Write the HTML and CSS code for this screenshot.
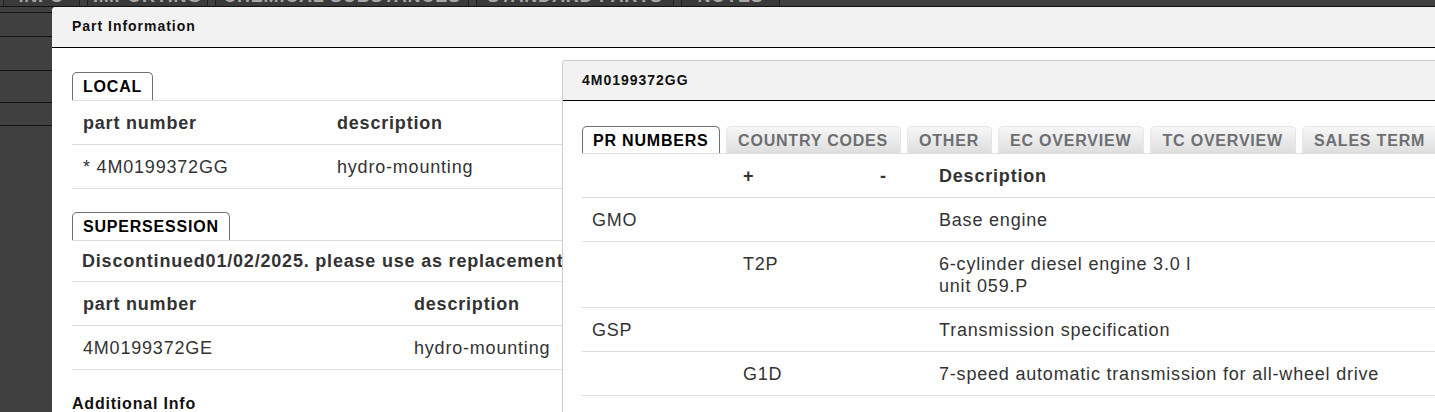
FILE: index.html
```html
<!DOCTYPE html>
<html lang="en">
<head>
    <meta charset="UTF-8">
    <title>Part Information</title>
    <link rel="stylesheet" href="styles.css">
</head>
<body>
    <!-- Main application behind the dialogs -->
    <div class="app-tabs">
        <div class="app-tab" style="width: 77px"><span>INFO</span></div>
        <div class="app-tab" style="width: 121px"><span>IMPORTING</span></div>
        <div class="app-tab" style="width: 254px"><span>CHEMICAL SUBSTANCES</span></div>
        <div class="app-tab" style="width: 198px"><span>STANDARD PARTS</span></div>
        <div class="app-tab" style="width: 99px"><span>NOTES</span></div>
    </div>
    <div class="app-rows">
        <div class="app-row" style="height: 6px"></div>
        <div class="app-row" style="height: 24px"></div>
        <div class="app-row" style="height: 34px"></div>
        <div class="app-row" style="height: 32px"></div>
        <div class="app-row" style="height: 23px"></div>
    </div>

    <!-- Part information dialog -->
    <div class="dialog dialog-part">
        <div class="dialog-header">Part Information</div>
        <div class="dialog-body">
            <div class="section-tabs">
                <span class="section-tab">LOCAL</span>
            </div>
            <table class="grid grid-local">
                <tr>
                    <th>part number</th>
                    <th>description</th>
                </tr>
                <tr>
                    <td>* 4M0199372GG</td>
                    <td>hydro-mounting</td>
                </tr>
            </table>

            <div class="section-tabs">
                <span class="section-tab">SUPERSESSION</span>
            </div>
            <div class="notice">Discontinued01/02/2025. please use as replacement</div>
            <table class="grid grid-super">
                <tr>
                    <th>part number</th>
                    <th>description</th>
                </tr>
                <tr>
                    <td>4M0199372GE</td>
                    <td>hydro-mounting</td>
                </tr>
            </table>

            <h3 class="extra-title">Additional Info</h3>
        </div>
    </div>

    <!-- PR number detail dialog -->
    <div class="dialog dialog-pr">
        <div class="dialog-header">4M0199372GG</div>
        <div class="dialog-body">
            <div class="section-tabs pr-tabs">
                <span class="section-tab">PR NUMBERS</span>
                <span class="section-tab inactive">COUNTRY CODES</span>
                <span class="section-tab inactive">OTHER</span>
                <span class="section-tab inactive">EC OVERVIEW</span>
                <span class="section-tab inactive">TC OVERVIEW</span>
                <span class="section-tab inactive">SALES TERM</span>
            </div>
            <table class="grid grid-pr">
                <tr>
                    <th></th>
                    <th>+</th>
                    <th>-</th>
                    <th>Description</th>
                </tr>
                <tr>
                    <td>GMO</td>
                    <td></td>
                    <td></td>
                    <td>Base engine</td>
                </tr>
                <tr>
                    <td></td>
                    <td>T2P</td>
                    <td></td>
                    <td>6-cylinder diesel engine 3.0 l<br>unit 059.P</td>
                </tr>
                <tr>
                    <td>GSP</td>
                    <td></td>
                    <td></td>
                    <td>Transmission specification</td>
                </tr>
                <tr>
                    <td></td>
                    <td>G1D</td>
                    <td></td>
                    <td>7-speed automatic transmission for all-wheel drive</td>
                </tr>
            </table>
        </div>
    </div>
</body>
</html>
```

FILE: styles.css
```css
* {
    margin: 0;
    padding: 0;
    box-sizing: border-box;
}

body {
    font-family: "Liberation Sans", Arial, sans-serif;
    letter-spacing: 0.05em;
    background-color: #404040;
    color: #333;
    width: 1435px;
    height: 412px;
    overflow: hidden;
    position: relative;
}

/* Background application */
.app-tabs {
    display: flex;
    gap: 7px;
    padding-left: 3px;
    height: 7px;
    overflow: hidden;
    border-bottom: 1px solid #111;
}

.app-tab {
    height: 7px;
    border: 1px solid #222;
    border-top: none;
    background-color: #3a3a3a;
    color: #a8a8a8;
    font-size: 18px;
    font-weight: bold;
    text-align: center;
    line-height: 0;
    overflow: hidden;
}

.app-tab span {
    display: block;
    margin-top: -4px;
}

.app-rows {
    width: 52px;
}

.app-row {
    border-bottom: 1px solid #111;
}

/* Dialogs */
.dialog {
    position: absolute;
    background-color: #fff;
    border-top-left-radius: 4px;
    overflow: hidden;
}

.dialog-part {
    left: 52px;
    top: 7px;
    right: 0;
    bottom: 0;
}

.dialog-pr {
    left: 562px;
    top: 60px;
    right: 0;
    bottom: -20px;
    border: 1px solid #ccc;
    border-right: none;
}

.dialog-header {
    height: 41px;
    background-color: #f2f2f2;
    border-bottom: 1px solid #000;
    padding-left: 20px;
    font-size: 14px;
    font-weight: bold;
    letter-spacing: 0.07em;
    color: #111;
    line-height: 38px;
}

.dialog-pr .dialog-header {
    height: 40px;
    line-height: 39px;
    padding-left: 19px;
}

.dialog-body {
    padding: 24px 20px 0;
}

.dialog-pr .dialog-body {
    padding: 25px 19px 0;
}

/* Section tabs */
.section-tabs {
    display: flex;
    gap: 6px;
    border-bottom: 1px solid #dcdde3;
}

.section-tab {
    display: block;
    height: 28px;
    padding: 0 10px;
    border: 1px solid #707070;
    border-bottom: none;
    border-radius: 5px 5px 0 0;
    background-color: #fff;
    font-size: 16px;
    font-weight: bold;
    line-height: 27px;
    color: #000;
}

.section-tab.inactive {
    padding: 0 11.5px;
    border-color: #e6e6e6;
    background: linear-gradient(#f7f7f7, #dedede);
    color: #6c6f73;
}

.pr-tabs {
    width: 900px;
}

.pr-tabs .section-tab {
    height: 27px;
}

/* Tables */
.grid {
    border-collapse: collapse;
    font-size: 18px;
    color: #333;
}

.grid th,
.grid td {
    text-align: left;
    vertical-align: top;
    padding: 11px 10px 10px 11px;
    line-height: 22px;
    border-bottom: 1px solid #dcdde3;
}

.grid th {
    font-weight: bold;
}

.grid-local,
.grid-super {
    width: 520px;
}

.grid-local {
    margin-bottom: 23px;
}

.grid-local th:first-child {
    width: 254px;
}

.grid-super th:first-child {
    width: 331px;
}

.notice {
    padding: 9px 10px 9px 10px;
    font-size: 18px;
    font-weight: bold;
    line-height: 22px;
    white-space: nowrap;
    border-bottom: 1px solid #dcdde3;
}

.extra-title {
    margin-top: 25px;
    font-size: 16px;
    font-weight: bold;
    color: #111;
}

.grid-pr {
    width: 900px;
}

.grid-pr th,
.grid-pr td {
    padding-left: 10px;
}

.grid-pr th:nth-child(1) {
    width: 151px;
}

.grid-pr th:nth-child(2) {
    width: 137px;
}

.grid-pr th:nth-child(3) {
    width: 59px;
}
```
